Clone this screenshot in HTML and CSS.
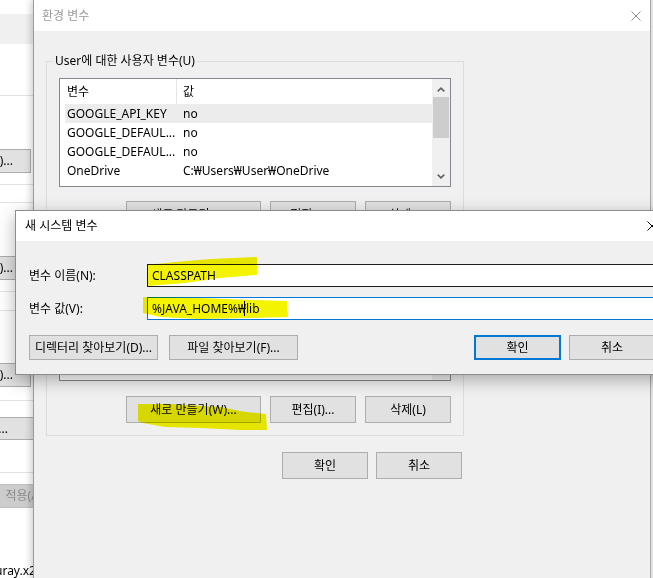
FILE: index.html
```html
<!DOCTYPE html>
<html lang="ko">
<head>
<meta charset="utf-8">
<title>환경 변수</title>
<link rel="stylesheet" href="styles.css">
</head>
<body>
<div class="screen">

  <div class="bgwin">
    <div class="bg-band"></div>
    <div class="bg-line l1"></div>
    <div class="bg-btn b1">)...</div>
    <div class="bg-line l2"></div>
    <div class="bg-line l3"></div>
    <div class="bg-btn b2">)...</div>
    <div class="bg-line l4"></div>
    <div class="bg-line l5"></div>
    <div class="bg-btn b3">)...</div>
    <div class="bg-line l6"></div>
    <div class="bg-bar">....</div>
    <div class="bg-line l7"></div>
    <div class="bg-btn dis">적용(A)</div>
    <div class="bg-file">uray.x2</div>
  </div>

  <div class="rstrip"></div>

  <div class="envwin">
    <div class="env-title">
      <span>환경 변수</span>
      <svg class="close" width="10" height="10" viewBox="0 0 10 10"><path d="M0.5 0.5L9.5 9.5M9.5 0.5L0.5 9.5" stroke="#8a8a8a" stroke-width="1" fill="none"/></svg>
    </div>
    <div class="env-body">
      <div class="group g-user">
        <div class="legend">User에 대한 사용자 변수(U)</div>
        <div class="list list-user">
          <div class="list-main">
            <div class="lhead"><span class="c1">변수</span><span class="c2">값</span></div>
            <div class="lrow sel"><span class="c1">GOOGLE_API_KEY</span><span class="c2">no</span></div>
            <div class="lrow"><span class="c1">GOOGLE_DEFAUL...</span><span class="c2">no</span></div>
            <div class="lrow"><span class="c1">GOOGLE_DEFAUL...</span><span class="c2">no</span></div>
            <div class="lrow"><span class="c1">OneDrive</span><span class="c2">C:₩Users₩User₩OneDrive</span></div>
          </div>
          <div class="vscroll">
            <div class="arrow up"><svg width="8" height="5" viewBox="0 0 8 5"><path d="M0.7 4.4L4 1.1L7.3 4.4" fill="none" stroke="#606060" stroke-width="1.5"/></svg></div>
            <div class="track"><div class="thumb"></div></div>
            <div class="arrow down"><svg width="8" height="5" viewBox="0 0 8 5"><path d="M0.7 0.6L4 3.9L7.3 0.6" fill="none" stroke="#606060" stroke-width="1.5"/></svg></div>
          </div>
        </div>
        <div class="btnrow">
          <div class="btn wide">새로 만들기(N)...</div>
          <div class="btn">편집(E)...</div>
          <div class="btn">삭제(D)</div>
        </div>
      </div>

      <div class="group g-sys">
        <div class="legend">시스템 변수(S)</div>
        <div class="list list-sys">
          <div class="list-main">
            <div class="lhead"><span class="c1">변수</span><span class="c2">값</span></div>
            <div class="lrow"><span class="c1">ComSpec</span><span class="c2">C:₩WINDOWS₩system32₩cmd.exe</span></div>
            <div class="lrow"><span class="c1">DriverData</span><span class="c2">C:₩Windows₩System32₩Drivers₩DriverData</span></div>
            <div class="lrow"><span class="c1">JAVA_HOME</span><span class="c2">C:₩Program Files₩Java₩jdk1.8.0</span></div>
            <div class="lrow"><span class="c1">NUMBER_OF_P...</span><span class="c2">8</span></div>
          </div>
          <div class="vscroll">
            <div class="arrow up"></div>
            <div class="track"></div>
            <div class="arrow down"></div>
          </div>
        </div>
        <div class="btnrow">
          <div class="btn wide">새로 만들기(W)...</div>
          <div class="btn">편집(I)...</div>
          <div class="btn">삭제(L)</div>
        </div>
      </div>

      <div class="okrow">
        <div class="btn">확인</div>
        <div class="btn">취소</div>
      </div>
    </div>
  </div>

  <div class="newwin">
    <div class="new-title">
      <span>새 시스템 변수</span>
      <svg class="close" width="10" height="10" viewBox="0 0 10 10"><path d="M0.5 0.5L9.5 9.5M9.5 0.5L0.5 9.5" stroke="#000" stroke-width="1" fill="none"/></svg>
    </div>
    <div class="new-body">
      <div class="field">
        <label>변수 이름(N):</label>
        <div class="input hover">CLASSPATH</div>
      </div>
      <div class="field">
        <label>변수 값(V):</label>
        <div class="input focus">%JAVA_HOME%₩<span class="caret"></span>lib</div>
      </div>
      <div class="new-btns">
        <div class="btn b-dir">디렉터리 찾아보기(D)...</div>
        <div class="btn b-file">파일 찾아보기(F)...</div>
        <div class="btn b-ok">확인</div>
        <div class="btn b-cancel">취소</div>
      </div>
    </div>
  </div>

  <svg class="marker" width="653" height="578" viewBox="0 0 653 578">
    <polygon points="147,265 175,262 210,259 257,257 257,275 220,278 185,283 147,286"/>
    <polygon points="143,297 200,298 250,300 287,301 288,317 250,318 200,319 160,317 143,313"/>
    <polygon points="138,404 170,404 220,407 245,412 266,414 267,430 240,430 200,428 165,427 143,423 138,421"/>
  </svg>
</div>
</body>
</html>
```

FILE: styles.css
```css
* { box-sizing: border-box; }
html, body { margin: 0; padding: 0; }
body {
  background: #fff;
  font-family: "Noto Sans", "Noto Sans CJK KR", sans-serif;
  font-size: 12px;
  line-height: 16px;
  color: #000;
}
.screen {
  position: relative;
  width: 653px;
  height: 578px;
  overflow: hidden;
  background: #fff;
}

/* background window on the left */
.bgwin {
  position: absolute;
  left: -367px;
  top: 0;
  width: 400px;
  height: 578px;
  background: #fff;
  display: flex;
  flex-direction: column;
  white-space: nowrap;
}
.bg-band { height: 30px; margin-top: 14px; background: #f0f0f0; }
.bg-line { height: 1px; background: #e2e2e2; flex: none; }
.bg-btn {
  height: 24px;
  flex: none;
  margin-right: 2px;
  border: 1px solid #adadad;
  background: #e1e1e1;
  display: flex;
  align-items: center;
  justify-content: flex-end;
  padding-right: 17px;
}
.l1 { margin-top: 51px; }
.b1 { margin-top: 53px; }
.l2 { margin-top: 11px; }
.l3 { margin-top: 17px; }
.b2 { margin-top: 53px; }
.l4 { margin-top: 11px; }
.l5 { margin-top: 18px; }
.b3 { margin-top: 52px; }
.l6 { margin-top: 13px; }
.bg-bar {
  margin-top: 16px;
  height: 23px;
  flex: none;
  background: #e1e1e1;
  border-top: 1px solid #adadad;
  border-bottom: 1px solid #adadad;
  display: flex;
  align-items: center;
  justify-content: flex-end;
  padding-right: 25px;
}
.l7 { margin-top: 32px; }
.bg-btn.dis {
  margin-top: 11px;
  width: 86px;
  margin-left: 348px;
  justify-content: center;
  padding-right: 0;
  background: #cccccc;
  border-color: #bfbfbf;
  color: #8a8a8a;
}
.bg-file {
  margin-top: auto;
  margin-bottom: 0;
  height: 15px;
  padding-left: 362px;
}

.rstrip {
  position: absolute;
  left: 651px;
  top: 0;
  width: 2px;
  height: 578px;
  background: #e6e6e6;
}

/* 환경 변수 dialog */
.envwin {
  position: absolute;
  left: 33px;
  top: 0;
  width: 618px;
  height: 600px;
  background: #f0f0f0;
  border-left: 1px solid #9a9a9a;
  border-right: 1px solid #a8a8a8;
  box-shadow: -3px 0 6px rgba(0, 0, 0, 0.16);
}
.env-title {
  height: 31px;
  background: #fff;
  display: flex;
  align-items: center;
  padding-left: 8px;
  color: #9b9b9b;
}
.close { margin-left: auto; flex: none; }
.env-title .close { margin-right: 9px; }

.env-body {
  padding-left: 12px;
  display: flex;
  flex-direction: column;
  align-items: flex-start;
}
.group {
  width: 418px;
  border: 1px solid #dcdcdc;
  padding: 0 12px 11px 12px;
}
.g-user { margin-top: 30px; }
.g-sys { margin-top: 10px; padding-bottom: 12px; }
.legend {
  width: fit-content;
  height: 16px;
  margin: -9px 0 0 -6px;
  padding: 0 2px;
  background: #f0f0f0;
  white-space: nowrap;
}

.list {
  margin-top: 9px;
  display: flex;
  border: 1px solid #828790;
  background: #fff;
}
.list-user { height: 109px; }
.list-sys { height: 114px; }
.list-main { flex: 1; overflow: hidden; white-space: nowrap; }
.lhead { height: 25px; display: flex; }
.lhead .c1 {
  width: 117px;
  padding-left: 7px;
  border-right: 1px solid #e5e5e5;
  display: flex;
  align-items: center;
}
.lhead .c2 { padding-left: 6px; display: flex; align-items: center; }
.lrow {
  height: 19px;
  margin-left: 5px;
  display: flex;
  align-items: center;
}
.lrow .c1 { width: 112px; padding-left: 2px; flex: none; }
.lrow .c2 { padding-left: 6px; }
.lrow.sel { background: #ececec; }

.vscroll {
  width: 18px;
  flex: none;
  background: #f0f0f0;
  display: flex;
  flex-direction: column;
}
.arrow {
  height: 18px;
  flex: none;
  display: flex;
  align-items: center;
  justify-content: center;
}
.arrow.up { padding-top: 2px; }
.arrow.down { padding-bottom: 2px; }
.track { flex: 1; }
.thumb { height: 41px; margin: 0 1px; background: #cdcdcd; }

.btn {
  height: 27px;
  width: 86px;
  flex: none;
  border: 1px solid #adadad;
  background: #e1e1e1;
  display: flex;
  align-items: center;
  justify-content: center;
  white-space: nowrap;
}
.btn.wide { width: 135px; }
.btnrow {
  margin-top: 14px;
  display: flex;
  justify-content: flex-end;
  gap: 9px;
}
.g-sys .btnrow { margin-top: 15px; }
.okrow {
  width: 418px;
  margin-top: 16px;
  padding-right: 2px;
  display: flex;
  justify-content: flex-end;
  gap: 8px;
}

/* 새 시스템 변수 dialog */
.newwin {
  position: absolute;
  left: 15px;
  top: 210px;
  width: 653px;
  border: 1px solid #8c8c8c;
  background: #f0f0f0;
  box-shadow: 0 5px 16px rgba(0, 0, 0, 0.3);
}
.new-title {
  height: 30px;
  background: #fff;
  display: flex;
  align-items: center;
  padding-left: 9px;
}
.new-title .close { margin-right: 10px; }
.new-body {
  padding: 23px 12px 14px 13px;
  display: flex;
  flex-direction: column;
}
.field { display: flex; align-items: center; height: 23px; }
.field + .field { margin-top: 10px; }
.field label { width: 118px; flex: none; white-space: nowrap; }
.input {
  flex: 1;
  height: 23px;
  border: 1px solid #1e1e1e;
  background: #fff;
  padding-left: 4px;
  display: flex;
  align-items: center;
  white-space: nowrap;
}
.input.focus { border-color: #0078d7; }
.caret {
  display: inline-block;
  width: 1px;
  height: 15px;
  margin-left: -2px;
  margin-right: 1px;
  background: #000;
}
.new-btns { display: flex; margin-top: 15px; }
.new-btns .btn { height: 25px; }
.b-dir, .b-file { width: 129px; }
.b-file { margin-left: 11px; }
.b-ok { margin-left: auto; width: 87px; border: 2px solid #0078d7; }
.b-cancel { width: 86px; margin-left: 8px; }

/* highlighter strokes */
.marker {
  position: absolute;
  left: 0;
  top: 0;
  pointer-events: none;
  mix-blend-mode: multiply;
}
.marker polygon { fill: #f4f400; }
```
